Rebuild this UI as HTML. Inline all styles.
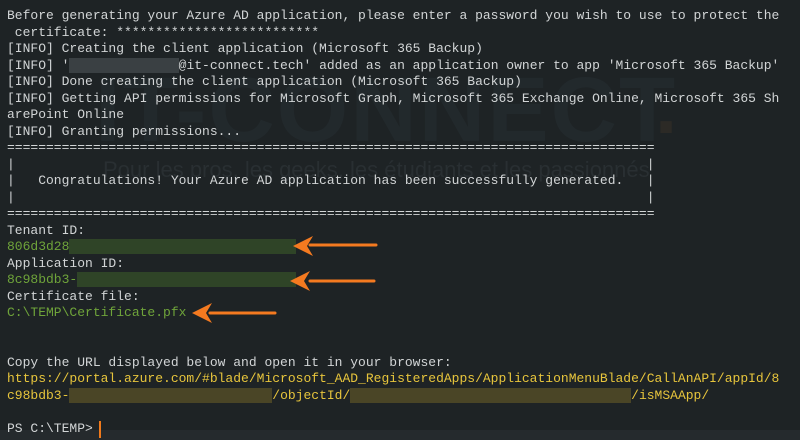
<!DOCTYPE html>
<html><head><meta charset="utf-8"><style>
html,body{margin:0;padding:0;background:#1e2325;width:800px;height:440px;overflow:hidden;position:relative}
.wm{position:absolute;font-family:"Liberation Sans",sans-serif;color:#22292c;white-space:nowrap}
pre{position:absolute;left:7px;top:8px;margin:0;font-family:"Liberation Mono","DejaVu Sans Mono",monospace;font-size:13px;line-height:16.5px;color:#d2d5d6;white-space:pre}
.g{color:#6fa43a}.y{color:#e7c53c}
.r{background:#3a4043;color:transparent}
.rg{background:#2f4427;color:transparent}
.ry{background:#4a4526;color:transparent}
.bot{position:absolute;left:0;top:430px;width:800px;height:10px;background:#252a2d}
.cur{position:absolute;left:99px;top:421px;width:2px;height:17px;background:#f07a1c}
</style></head><body>
<div class="wm" style="left:95px;top:58px;font-size:92px;font-weight:bold;letter-spacing:2px">IT-CONNECT</div>
<div class="wm" style="left:655px;top:60px;font-size:80px;font-weight:bold;color:#2c2a26">.</div>
<div class="wm" style="left:103px;top:157px;font-size:22px;color:#292f32">Pour les pros, les geeks, les étudiants et les passionnés</div>
<div class="bot"></div>
<pre>Before generating your Azure AD application, please enter a password you wish to use to protect the
 certificate: **************************
[INFO] Creating the client application (Microsoft 365 Backup)
[INFO] '<span class="r">xxxxxxxxxxxxxx</span>@it-connect.tech' added as an application owner to app 'Microsoft 365 Backup'
[INFO] Done creating the client application (Microsoft 365 Backup)
[INFO] Getting API permissions for Microsoft Graph, Microsoft 365 Exchange Online, Microsoft 365 Sh
arePoint Online
[INFO] Granting permissions...
===================================================================================
|                                                                                 |
|   Congratulations! Your Azure AD application has been successfully generated.   |
|                                                                                 |
===================================================================================
Tenant ID:
<span class="g">806d3d28</span><span class="rg">xxxxxxxxxxxxxxxxxxxxxxxxxxxxx</span>
Application ID:
<span class="g">8c98bdb3-</span><span class="rg">xxxxxxxxxxxxxxxxxxxxxxxxxxxx</span>
Certificate file:
<span class="g">C:\TEMP\Certificate.pfx</span>


Copy the URL displayed below and open it in your browser:
<span class="y">https://portal.azure.com/#blade/Microsoft_AAD_RegisteredApps/ApplicationMenuBlade/CallAnAPI/appId/8
c98bdb3-</span><span class="ry">xxxxxxxxxxxxxxxxxxxxxxxxxx</span><span class="y">/objectId/</span><span class="ry">xxxxxxxxxxxxxxxxxxxxxxxxxxxxxxxxxxxx</span><span class="y">/isMSAApp/</span>

PS C:\TEMP&gt; </pre>
<div class="cur"></div>
<svg width="800" height="440" style="position:absolute;left:0;top:0" fill="#f47a20" stroke="#f47a20">
<g stroke-width="3" stroke-linecap="round">
<line x1="310" y1="245" x2="376" y2="245"/>
<line x1="310" y1="281" x2="374" y2="281"/>
<line x1="210" y1="313" x2="275" y2="313"/>
</g>
<g stroke="none">
<polygon points="293,246 313,236 307,246 313,256"/>
<polygon points="290,281 310,271 304,281 310,291"/>
<polygon points="192,313 212,303 206,313 212,323"/>
</g>
</svg>
</body></html>
